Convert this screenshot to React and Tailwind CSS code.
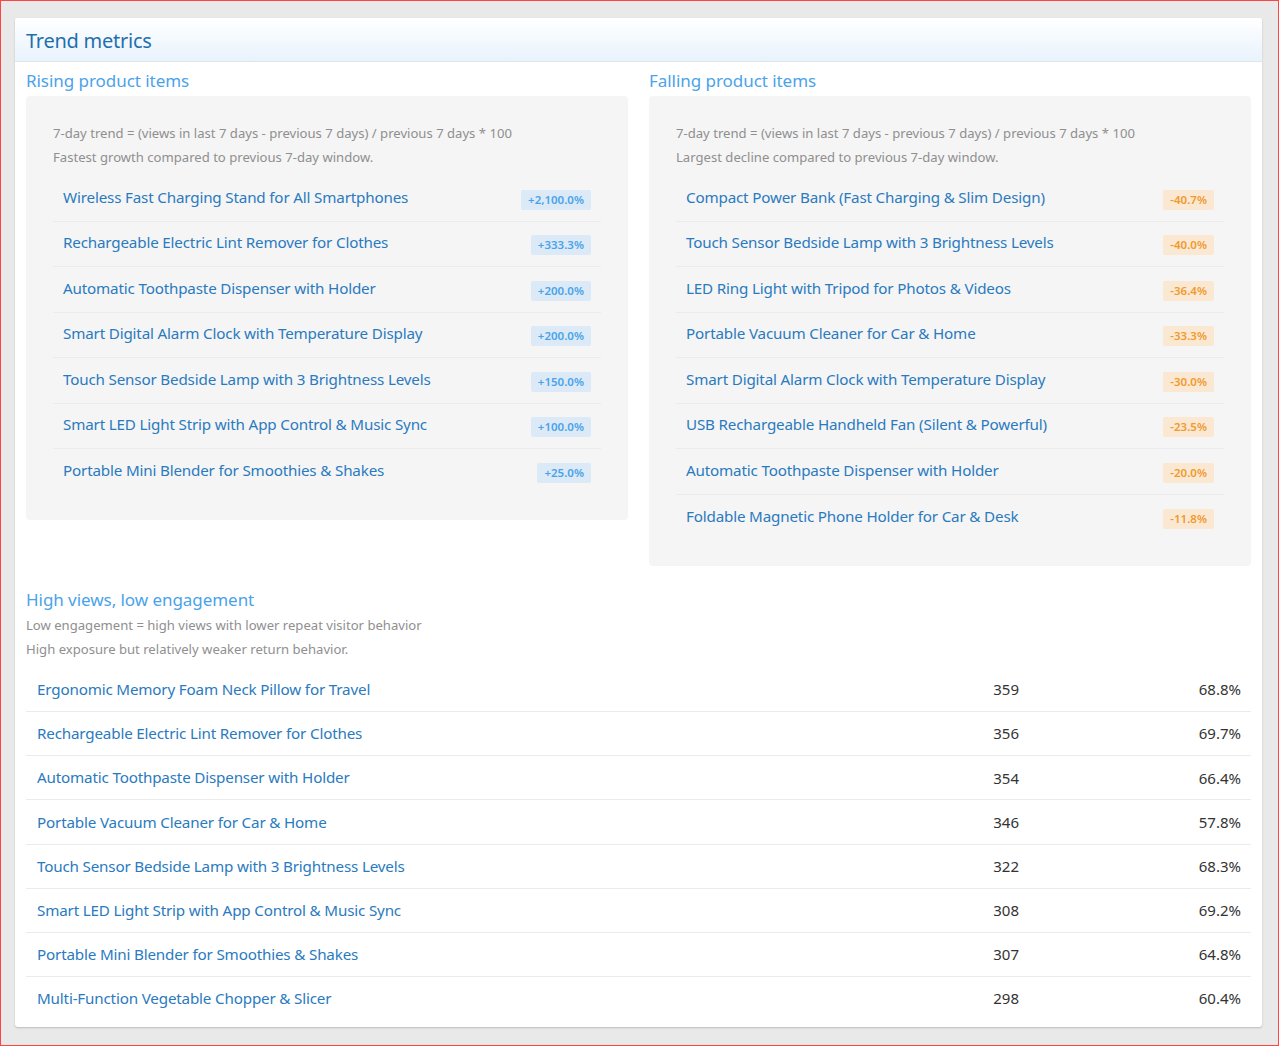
import React from 'react';

const rising = [
  ['Wireless Fast Charging Stand for All Smartphones', '+2,100.0%'],
  ['Rechargeable Electric Lint Remover for Clothes', '+333.3%'],
  ['Automatic Toothpaste Dispenser with Holder', '+200.0%'],
  ['Smart Digital Alarm Clock with Temperature Display', '+200.0%'],
  ['Touch Sensor Bedside Lamp with 3 Brightness Levels', '+150.0%'],
  ['Smart LED Light Strip with App Control & Music Sync', '+100.0%'],
  ['Portable Mini Blender for Smoothies & Shakes', '+25.0%'],
];

const falling = [
  ['Compact Power Bank (Fast Charging & Slim Design)', '-40.7%'],
  ['Touch Sensor Bedside Lamp with 3 Brightness Levels', '-40.0%'],
  ['LED Ring Light with Tripod for Photos & Videos', '-36.4%'],
  ['Portable Vacuum Cleaner for Car & Home', '-33.3%'],
  ['Smart Digital Alarm Clock with Temperature Display', '-30.0%'],
  ['USB Rechargeable Handheld Fan (Silent & Powerful)', '-23.5%'],
  ['Automatic Toothpaste Dispenser with Holder', '-20.0%'],
  ['Foldable Magnetic Phone Holder for Car & Desk', '-11.8%'],
];

const lowEngagement = [
  ['Ergonomic Memory Foam Neck Pillow for Travel', '359', '68.8%'],
  ['Rechargeable Electric Lint Remover for Clothes', '356', '69.7%'],
  ['Automatic Toothpaste Dispenser with Holder', '354', '66.4%'],
  ['Portable Vacuum Cleaner for Car & Home', '346', '57.8%'],
  ['Touch Sensor Bedside Lamp with 3 Brightness Levels', '322', '68.3%'],
  ['Smart LED Light Strip with App Control & Music Sync', '308', '69.2%'],
  ['Portable Mini Blender for Smoothies & Shakes', '307', '64.8%'],
  ['Multi-Function Vegetable Chopper & Slicer', '298', '60.4%'],
];

const TrendCard = ({ title, note, items, badgeClass }) => (
  <div className="w-[602px]">
    <h3 className="h-[34.5px] pt-[6.5px] text-[17px] leading-[25px] tracking-[-0.05px] text-[#4aa3ea]">{title}</h3>
    <div className="rounded-[4px] bg-[#f5f5f5] pt-[24.5px] pr-[27px] pb-[25.5px] pl-[27px]">
      <p className="text-[13.1px] leading-[24px] text-[#8f8f8f]">
        7-day trend = (views in last 7 days - previous 7 days) / previous 7 days * 100
      </p>
      <p className="text-[13.1px] leading-[24px] text-[#8f8f8f]">{note}</p>
      <ul className="mt-[7.5px]">
        {items.map(([name, pct], i) => (
          <li
            key={name}
            className={`flex h-[45.5px] items-center justify-between px-[10px] ${i < items.length - 1 ? 'border-b border-[#ebebeb]' : ''}`}
          >
            <a href="#" className="mb-[2px] text-[15.2px] tracking-[-0.17px] text-[#2a7ac0]">{name}</a>
            <span className={`mt-[3px] rounded-[2px] px-[7px] text-[11.5px] leading-[20px] font-semibold ${badgeClass}`}>{pct}</span>
          </li>
        ))}
      </ul>
    </div>
  </div>
);

const App = () => {
  return (
    <div
      className="h-[1046px] overflow-hidden border border-[#f44] bg-[#e9e9e9] pt-[17px] pr-[16px] pl-[14px]"
      style={{ fontFamily: '"Noto Sans", sans-serif' }}
    >
      <div className="h-[1009px] rounded-[3px] bg-white shadow-[0_1px_2px_rgba(0,0,0,0.2)]">
        <div className="h-[43.5px] rounded-t-[3px] border-b border-[#dfe5ea] bg-gradient-to-b from-white to-[#e8f3fc] px-[11px] text-[20px] leading-[45px] tracking-[-0.25px] text-[#1f6fae]">
          Trend metrics
        </div>
        <div className="px-[11px]">
          <div className="flex items-start justify-between">
            <TrendCard
              title="Rising product items"
              note="Fastest growth compared to previous 7-day window."
              items={rising}
              badgeClass="bg-[#dbeaf6] text-[#4aa3ea]"
            />
            <TrendCard
              title="Falling product items"
              note="Largest decline compared to previous 7-day window."
              items={falling}
              badgeClass="bg-[#fae8d2] text-[#f09a2e]"
            />
          </div>
          <h3 className="mt-[21px] text-[17px] leading-[25px] tracking-[-0.05px] text-[#4aa3ea]">High views, low engagement</h3>
          <p className="mt-[1px] text-[13.1px] leading-[24px] text-[#8f8f8f]">Low engagement = high views with lower repeat visitor behavior</p>
          <p className="text-[13.1px] leading-[24px] text-[#8f8f8f]">High exposure but relatively weaker return behavior.</p>
          <table className="mt-[7px] w-full">
            <tbody>
              {lowEngagement.map(([name, views, rate], i) => (
                <tr key={name} className={`h-[44.14px] ${i < lowEngagement.length - 1 ? 'border-b border-[#ebebeb]' : ''}`}>
                  <td className="px-[11px] text-[15.2px] tracking-[-0.17px] text-[#2a7ac0]"><a href="#">{name}</a></td>
                  <td className="w-[222px] text-right text-[15px] text-[#333]">{views}</td>
                  <td className="w-[232px] px-[10px] text-right text-[15px] text-[#333]">{rate}</td>
                </tr>
              ))}
            </tbody>
          </table>
        </div>
      </div>
    </div>
  );
};

export default App;
